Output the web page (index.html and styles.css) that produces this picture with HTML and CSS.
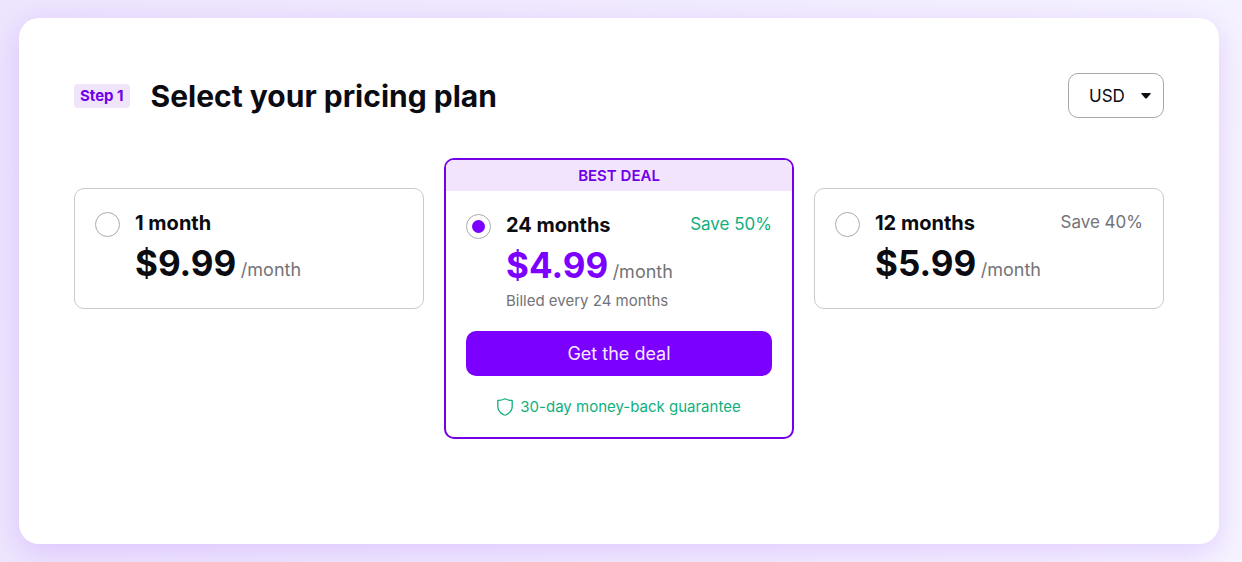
FILE: index.html
```html
<!DOCTYPE html>
<html lang="en">
<head>
  <meta charset="UTF-8">
  <meta name="viewport" content="width=device-width, initial-scale=1">
  <title>Select your pricing plan</title>
  <link rel="stylesheet" href="styles.css">
</head>
<body>

<form class="panel">
  <header class="panel-header">
    <span class="step">Step 1</span>
    <h1>Select your pricing plan</h1>
    <div class="currency">
      <select class="currency-select" aria-label="Currency">
        <option selected>USD</option>
        <option>EUR</option>
        <option>GBP</option>
      </select>
      <svg class="currency-arrow" width="10" height="6" viewBox="0 0 10 6" aria-hidden="true">
        <path d="M1 0h8q1.400 0 .5 1L6 5q-1 1-2 0L.5 1Q-.4 0 1 0z" fill="currentColor"/>
      </svg>
    </div>
  </header>

  <div class="plans">
    <div class="plan">
      <div class="plan-body">
        <input class="plan-radio" type="radio" name="plan" id="plan1">
        <label class="plan-name" for="plan1">1 month</label>
        <p class="plan-price"><strong>$9.99</strong> <span class="period">/month</span></p>
      </div>
    </div>

    <div class="plan featured">
      <div class="banner">BEST DEAL</div>
      <div class="plan-body">
        <input class="plan-radio" type="radio" name="plan" id="plan24" checked>
        <label class="plan-name" for="plan24">24 months</label>
        <span class="save">Save 50%</span>
        <p class="plan-price"><strong>$4.99</strong> <span class="period">/month</span></p>
        <p class="billed">Billed every 24 months</p>
        <button class="deal-button" type="button">Get the deal</button>
        <p class="guarantee">
          <svg width="16" height="18" viewBox="0 0 16 18" fill="none" stroke="currentColor" stroke-width="1.300" stroke-linejoin="round" aria-hidden="true">
            <path d="M8 .8C5.900 2 3.500 2.500.8 2.500v6c0 3.600 2.200 6.300 5.900 8.300q1.300.7 2.600 0c3.700-2 5.900-4.700 5.900-8.300v-6C12.500 2.500 10.100 2 8 .8z"/>
          </svg>
          30-day money-back guarantee
        </p>
      </div>
    </div>

    <div class="plan">
      <div class="plan-body">
        <input class="plan-radio" type="radio" name="plan" id="plan12">
        <label class="plan-name" for="plan12">12 months</label>
        <span class="save">Save 40%</span>
        <p class="plan-price"><strong>$5.99</strong> <span class="period">/month</span></p>
      </div>
    </div>
  </div>
</form>

</body>
</html>
```
FILE: styles.css
```css
* {
  box-sizing: border-box;
}

body {
  margin: 0;
  min-height: 100vh;
  padding: 18px 23px 18px 19px;
  display: flex;
  font-family: Inter, "Liberation Sans", sans-serif;
  color: #0b0b12;
  background: linear-gradient(100deg, #ede4fd, #f6f3ff);
}

h1,
p {
  margin: 0;
}

.panel {
  flex: 1;
  padding: 55px;
  border-radius: 20px;
  background-color: white;
  box-shadow: 0 8px 30px rgba(120, 0, 255, 0.15);
}

.panel-header {
  display: flex;
  align-items: center;
  gap: 21px;
  margin-bottom: 40px;
}

.step {
  padding: 2px 6px;
  border-radius: 4px;
  background-color: #f0e4fb;
  color: #6f00e8;
  font-size: 15px;
  font-weight: 700;
  line-height: 20px;
}

h1 {
  font-size: 30px;
  font-weight: 700;
  line-height: 40px;
}

.currency {
  display: grid;
  align-items: center;
  margin-left: auto;
}

.currency-select,
.currency-arrow {
  grid-area: 1 / 1;
}

.currency-select {
  appearance: none;
  width: 96px;
  height: 45px;
  padding: 0 20px;
  border: 1px solid #a8a8ae;
  border-radius: 10px;
  background-color: white;
  color: inherit;
  font-family: inherit;
  font-size: 17px;
  cursor: pointer;
}

.currency-arrow {
  justify-self: end;
  margin-right: 13px;
  pointer-events: none;
}

.plans {
  display: grid;
  grid-template-columns: repeat(3, 1fr);
  gap: 20px;
  align-items: start;
}

.plan {
  margin-top: 30px;
  border: 1px solid #cacace;
  border-radius: 10px;
  overflow: hidden;
}

.plan.featured {
  margin-top: 0;
  border: 2px solid #7300e6;
}

.banner {
  background-color: #f1e4fc;
  color: #6f00e8;
  font-size: 15px;
  font-weight: 600;
  line-height: 31px;
  text-align: center;
}

.plan-body {
  display: grid;
  grid-template-columns: 25px 1fr auto;
  column-gap: 15px;
  padding: 20px;
}

.plan-radio {
  appearance: none;
  display: grid;
  place-items: center;
  width: 25px;
  height: 25px;
  margin: 3px 0 0;
  grid-row: 1 / 3;
  border: 1px solid #aaaaae;
  border-radius: 50%;
  background-color: white;
  cursor: pointer;
}

.plan-radio:checked::before {
  content: "";
  width: 13px;
  height: 13px;
  border-radius: 50%;
  background-color: #7b00ff;
}

.plan-name {
  font-size: 20px;
  font-weight: 700;
  line-height: 28px;
}

.save {
  color: #737377;
  font-size: 17px;
  line-height: 26px;
}

.featured .save {
  color: #0fb07e;
}

.plan-price {
  grid-column: 2 / 4;
  padding-top: 2px;
  line-height: 1;
}

.plan-price strong {
  font-size: 35px;
  font-weight: 700;
  line-height: 49px;
}

.featured .plan-price strong {
  color: #7b00ff;
}

.period {
  color: #737377;
  font-size: 18px;
}

.billed {
  grid-column: 2 / 4;
  color: #737377;
  font-size: 15px;
  line-height: 22px;
}

.deal-button {
  grid-column: 1 / 4;
  height: 45px;
  margin: 19px 0 20px;
  border: none;
  border-radius: 10px;
  background-color: #7b00ff;
  color: #f6e9ff;
  font-family: inherit;
  font-size: 18px;
  cursor: pointer;
}

.guarantee {
  grid-column: 1 / 4;
  display: flex;
  justify-content: center;
  align-items: center;
  gap: 7px;
  color: #0fb07e;
  font-size: 15px;
  line-height: 21px;
}
```
